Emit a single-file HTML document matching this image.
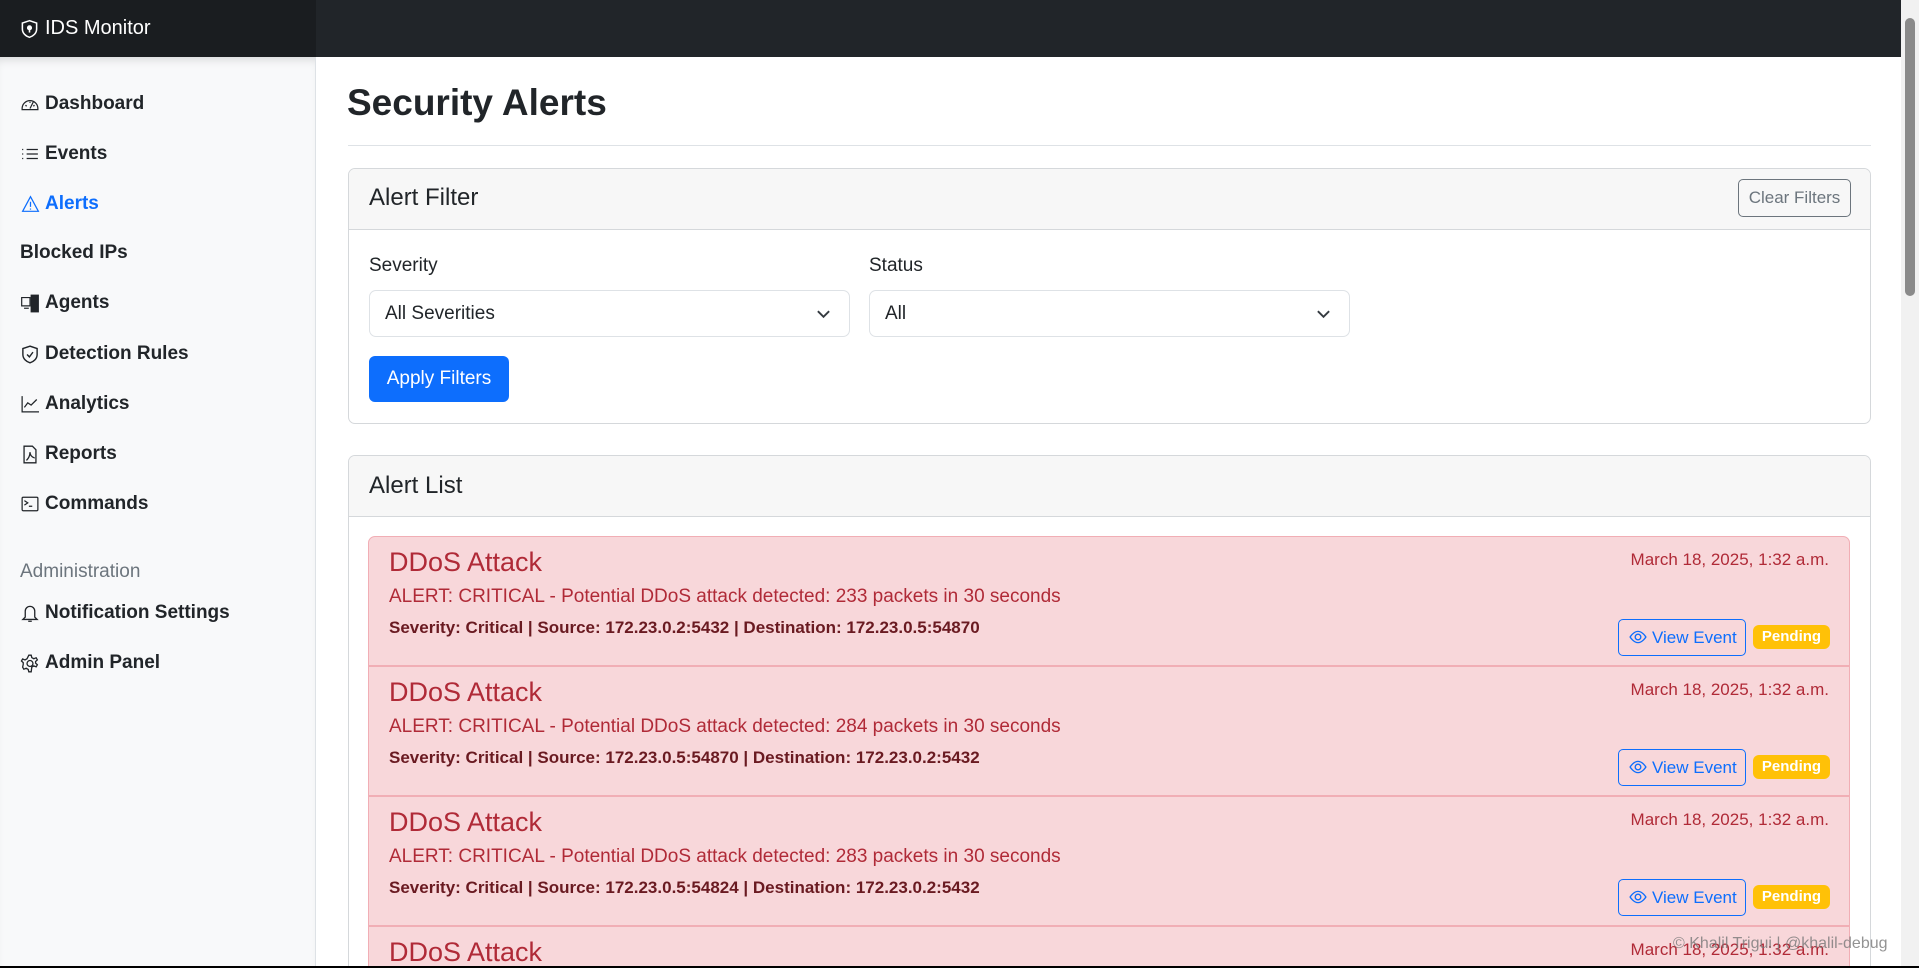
<!DOCTYPE html>
<html><head><meta charset="utf-8"><style>
*{box-sizing:border-box;margin:0;padding:0}
html,body{width:1919px;height:968px;overflow:hidden}
body{background:#fff;font-family:"Liberation Sans",sans-serif;color:#212529;font-size:18px}
#wrap{position:relative;width:1919px;height:968px;overflow:hidden}
.abs{position:absolute}
.nav{left:0;top:0;width:1901px;height:57px;background:#212529}
.brand{left:0;top:0;width:316px;height:57px;background:#1a1d20;color:#fff;font-size:20px;line-height:57px;padding-left:45px}
.side{left:0;top:57px;width:316px;height:911px;background:#f8f9fa;border-right:1px solid #dee2e6;box-shadow:inset 0 8px 10px -6px rgba(0,0,0,.15)}
.ni{position:absolute;left:45px;font-size:19px;font-weight:bold;color:#212529;line-height:24px}
.ni svg{position:absolute;left:-25px;top:3px}
.sb{left:1901px;top:0;width:18px;height:968px;background:#f1f1f1}
.card{border:1px solid #d5d8db;border-radius:7px;background:#fff;overflow:hidden}
.ch{background:#f7f7f7;border-bottom:1px solid #d5d8db;font-size:24px;padding-left:20px}
.sel{border:1px solid #dee2e6;border-radius:7px;background:#fff;font-size:19px;padding-left:15px;line-height:45px}
.alert{left:368px;width:1482px;height:130px;background:#f8d7da;border:1px solid #f1aeb5;border-top:none;overflow:hidden}
.t{position:absolute;left:20px;top:10px;font-size:27px;color:#b02a37}
.d{position:absolute;left:20px;top:49px;font-size:19px;color:#b02a37}
.b{position:absolute;left:20px;top:81px;font-size:17px;font-weight:bold;color:#6a1a21}
.dt{position:absolute;right:20px;top:13px;font-size:17px;color:#b02a37}
.ve{position:absolute;left:1249px;top:82px;width:128px;height:37px;border:1px solid #0d6efd;border-radius:5px;color:#0d6efd;font-size:17px;line-height:35px;padding-left:33px}
.ve svg{position:absolute;left:10px;top:10px}
.pd{position:absolute;left:1384px;top:88px;width:77px;height:24px;background:#ffc107;border-radius:6px;color:#fff;font-weight:bold;font-size:15px;text-align:center;line-height:24px}
</style></head><body><div id="wrap">
<div class="abs nav"></div>
<div class="abs brand">IDS Monitor<svg class="abs" style="left:20px;top:19px" width="19" height="20" viewBox="0 0 16 16" fill="none" stroke="#fff" stroke-width="1.3"><path d="M8 1 2 3v5c0 3.5 2.7 6 6 7 3.3-1 6-3.5 6-7V3z"/><circle cx="8" cy="7" r="1.5" fill="#fff"/><path d="M8 8v3"/></svg></div>
<div class="abs side">
<div class="ni" style="top:35px"><svg width="20" height="18" viewBox="0 0 16 16" fill="none" stroke="#212529" stroke-width="1.1"><path d="M1 12a7 7 0 0 1 14 0v1H1z"/><path d="M8 12 11 6M4 9l1 1M12 9l-1 1M8 6v1"/></svg>Dashboard</div>
<div class="ni" style="top:85px"><svg width="20" height="18" viewBox="0 0 16 16" stroke="#212529" stroke-width="1.2"><path d="M1 4h1M1 8h1M1 12h1M5 4h10M5 8h10M5 12h10"/></svg>Events</div>
<div class="ni" style="top:135px;color:#0d6efd"><svg width="21" height="18" viewBox="0 0 16 16" fill="none" stroke="#0d6efd" stroke-width="1.1"><path d="M8 1.5 1 14.5h14z"/><path d="M8 6v4.5M8 12v1"/></svg>Alerts</div>
<div class="ni" style="top:184px;left:20px">Blocked IPs</div>
<div class="ni" style="top:234px"><svg width="20" height="19" viewBox="0 0 16 16" fill="#212529" stroke="#212529" stroke-width="1"><path d="M1 3h7v7H1z" fill="none"/><path d="M3 12h4"/><rect x="9" y="1" width="6" height="14"/></svg>Agents</div>
<div class="ni" style="top:285px"><svg width="20" height="19" viewBox="0 0 16 16" fill="none" stroke="#212529" stroke-width="1.2"><path d="M8 1 2 3v5c0 3.5 2.7 6 6 7 3.3-1 6-3.5 6-7V3z"/><path d="m5.5 8 2 2 3-4"/></svg>Detection Rules</div>
<div class="ni" style="top:335px"><svg width="20" height="18" viewBox="0 0 16 16" fill="none" stroke="#212529" stroke-width="1.1"><path d="M1 1v14h15M3 11l3-4 3 2 5-5"/></svg>Analytics</div>
<div class="ni" style="top:385px"><svg width="20" height="19" viewBox="0 0 16 16" fill="none" stroke="#212529" stroke-width="1.1"><path d="M3 1h7l3 3v11H3z"/><path d="M5 13c2-2 3-5 3-7 0 2 1 4 4 5"/></svg>Reports</div>
<div class="ni" style="top:435px"><svg width="20" height="18" viewBox="0 0 16 16" fill="none" stroke="#212529" stroke-width="1.1"><rect x="1" y="2" width="14" height="12" rx="1"/><path d="m3 5 3 2-3 2M7 10h3"/></svg>Commands</div>
<div class="ni" style="top:503px;left:20px;font-weight:normal;color:#6c757d">Administration</div>
<div class="ni" style="top:544px"><svg width="20" height="19" viewBox="0 0 16 16" fill="none" stroke="#212529" stroke-width="1.1"><path d="M8 2a4 4 0 0 0-4 4v5l-2 2h12l-2-2V6a4 4 0 0 0-4-4zM6.5 14.5h3"/></svg>Notification Settings</div>
<div class="ni" style="top:594px"><svg width="20" height="19" viewBox="0 0 16 16" fill="none" stroke="#212529" stroke-width="1.1"><circle cx="8" cy="8" r="2.5"/><path d="M7 1h2l.5 2 1.7 1 2-.8 1 1.7-1.5 1.4v1.4l1.5 1.4-1 1.7-2-.8-1.7 1L9 15H7l-.5-2-1.7-1-2 .8-1-1.7L2.3 8.7V7.3L.8 5.9l1-1.7 2 .8 1.7-1z"/></svg>Admin Panel</div>
</div>
<div class="abs sb"><div class="abs" style="left:4px;top:18px;width:10px;height:278px;background:#8a8a8a;border-radius:5px"></div></div>

<div class="abs" style="left:347px;top:82px;font-size:37px;font-weight:bold;color:#212529">Security Alerts</div>
<div class="abs" style="left:348px;top:145px;width:1523px;height:1px;background:#dee2e6"></div>

<div class="abs card" style="left:348px;top:168px;width:1523px;height:256px">
<div class="ch" style="height:61px;line-height:58px">Alert Filter</div>
<div class="abs" style="left:1389px;top:10px;width:113px;height:38px;border:1px solid #6c757d;border-radius:5px;color:#6c757d;font-size:17px;text-align:center;line-height:36px">Clear Filters</div>
<div class="abs" style="left:20px;top:86px;font-size:19px">Severity</div>
<div class="abs" style="left:520px;top:86px;font-size:19px">Status</div>
<div class="abs sel" style="left:20px;top:121px;width:481px;height:47px">All Severities<svg class="abs" style="right:18px;top:17px" width="15" height="12" viewBox="0 0 16 12" fill="none" stroke="#343a40" stroke-width="2"><path d="m2 3 6 6 6-6"/></svg></div>
<div class="abs sel" style="left:520px;top:121px;width:481px;height:47px">All<svg class="abs" style="right:18px;top:17px" width="15" height="12" viewBox="0 0 16 12" fill="none" stroke="#343a40" stroke-width="2"><path d="m2 3 6 6 6-6"/></svg></div>
<div class="abs" style="left:20px;top:187px;width:140px;height:46px;background:#0d6efd;border-radius:6px;color:#fff;font-size:19px;text-align:center;line-height:46px">Apply Filters</div>
</div>

<div class="abs card" style="left:348px;top:455px;width:1523px;height:513px;border-bottom:none;border-radius:7px 7px 0 0">
<div class="ch" style="height:61px;line-height:59px">Alert List</div>
</div>

<div class="abs alert" style="top:536px;border-top:1px solid #f1aeb5;border-radius:7px 7px 0 0"><div class="t">DDoS Attack</div><div class="d">ALERT: CRITICAL - Potential DDoS attack detected: 233 packets in 30 seconds</div><div class="b">Severity: Critical | Source: 172.23.0.2:5432 | Destination: 172.23.0.5:54870</div><div class="dt">March 18, 2025, 1:32 a.m.</div><div class="ve"><svg width="18" height="14" viewBox="0 0 16 12" fill="none" stroke="#0d6efd" stroke-width="1.2"><path d="M1 6s3-5 7-5 7 5 7 5-3 5-7 5-7-5-7-5z"/><circle cx="8" cy="6" r="2.5"/></svg>View Event</div><div class="pd">Pending</div></div>
<div class="abs alert" style="top:666px;border-top:1px solid #f1aeb5"><div class="t">DDoS Attack</div><div class="d">ALERT: CRITICAL - Potential DDoS attack detected: 284 packets in 30 seconds</div><div class="b">Severity: Critical | Source: 172.23.0.5:54870 | Destination: 172.23.0.2:5432</div><div class="dt">March 18, 2025, 1:32 a.m.</div><div class="ve"><svg width="18" height="14" viewBox="0 0 16 12" fill="none" stroke="#0d6efd" stroke-width="1.2"><path d="M1 6s3-5 7-5 7 5 7 5-3 5-7 5-7-5-7-5z"/><circle cx="8" cy="6" r="2.5"/></svg>View Event</div><div class="pd">Pending</div></div>
<div class="abs alert" style="top:796px;border-top:1px solid #f1aeb5"><div class="t">DDoS Attack</div><div class="d">ALERT: CRITICAL - Potential DDoS attack detected: 283 packets in 30 seconds</div><div class="b">Severity: Critical | Source: 172.23.0.5:54824 | Destination: 172.23.0.2:5432</div><div class="dt">March 18, 2025, 1:32 a.m.</div><div class="ve"><svg width="18" height="14" viewBox="0 0 16 12" fill="none" stroke="#0d6efd" stroke-width="1.2"><path d="M1 6s3-5 7-5 7 5 7 5-3 5-7 5-7-5-7-5z"/><circle cx="8" cy="6" r="2.5"/></svg>View Event</div><div class="pd">Pending</div></div>
<div class="abs alert" style="top:926px;height:42px;border-top:1px solid #f1aeb5;border-bottom:none"><div class="t">DDoS Attack</div><div class="dt">March 18, 2025, 1:32 a.m.</div></div>
<div class="abs" style="left:1673px;top:935px;font-size:16px;color:rgba(120,120,120,.8)">© Khalil Trigui | @khalil-debug</div>
<div class="abs" style="left:0;top:966px;width:1919px;height:2px;background:#000"></div>
</div></body></html>
